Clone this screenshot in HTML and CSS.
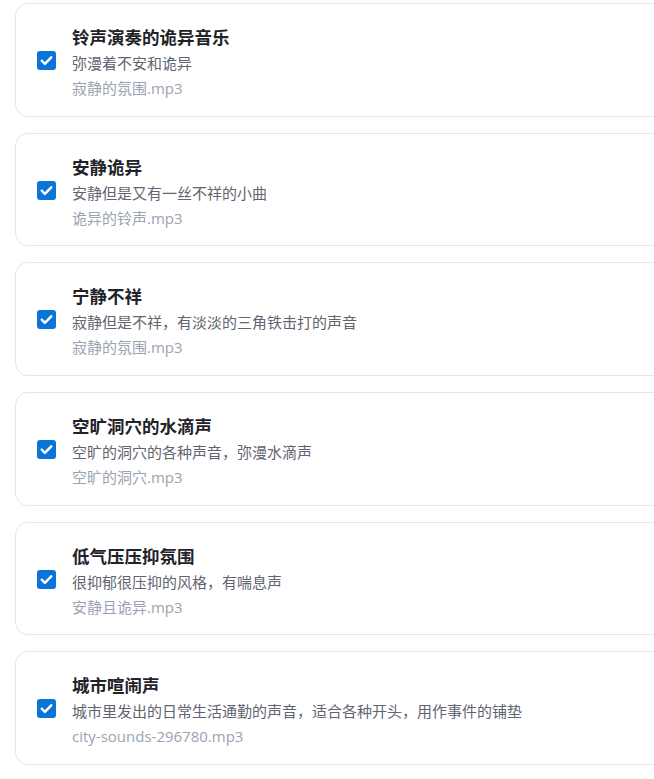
FILE: index.html
```html
<!DOCTYPE html>
<html lang="zh-CN">
<head>
    <meta charset="UTF-8">
    <meta name="viewport" content="width=device-width, initial-scale=1.0">
    <title>音效列表</title>
    <link rel="stylesheet" href="styles.css">
</head>
<body>

    <div class="page">
        <div class="sound-list">
            <label class="sound-card">
                <span class="check"><svg viewBox="0 0 20 20"><path d="M5 10.2l3.3 3.3L15 6.6"/></svg></span>
                <div class="info">
                    <div class="title">铃声演奏的诡异音乐</div>
                    <div class="desc">弥漫着不安和诡异</div>
                    <div class="file">寂静的氛围.mp3</div>
                </div>
            </label>

            <label class="sound-card">
                <span class="check"><svg viewBox="0 0 20 20"><path d="M5 10.2l3.3 3.3L15 6.6"/></svg></span>
                <div class="info">
                    <div class="title">安静诡异</div>
                    <div class="desc">安静但是又有一丝不祥的小曲</div>
                    <div class="file">诡异的铃声.mp3</div>
                </div>
            </label>

            <label class="sound-card">
                <span class="check"><svg viewBox="0 0 20 20"><path d="M5 10.2l3.3 3.3L15 6.6"/></svg></span>
                <div class="info">
                    <div class="title">宁静不祥</div>
                    <div class="desc">寂静但是不祥，有淡淡的三角铁击打的声音</div>
                    <div class="file">寂静的氛围.mp3</div>
                </div>
            </label>

            <label class="sound-card">
                <span class="check"><svg viewBox="0 0 20 20"><path d="M5 10.2l3.3 3.3L15 6.6"/></svg></span>
                <div class="info">
                    <div class="title">空旷洞穴的水滴声</div>
                    <div class="desc">空旷的洞穴的各种声音，弥漫水滴声</div>
                    <div class="file">空旷的洞穴.mp3</div>
                </div>
            </label>

            <label class="sound-card">
                <span class="check"><svg viewBox="0 0 20 20"><path d="M5 10.2l3.3 3.3L15 6.6"/></svg></span>
                <div class="info">
                    <div class="title">低气压压抑氛围</div>
                    <div class="desc">很抑郁很压抑的风格，有喘息声</div>
                    <div class="file">安静且诡异.mp3</div>
                </div>
            </label>

            <label class="sound-card">
                <span class="check"><svg viewBox="0 0 20 20"><path d="M5 10.2l3.3 3.3L15 6.6"/></svg></span>
                <div class="info">
                    <div class="title">城市喧闹声</div>
                    <div class="desc">城市里发出的日常生活通勤的声音，适合各种开头，用作事件的铺垫</div>
                    <div class="file">city-sounds-296780.mp3</div>
                </div>
            </label>
        </div>
    </div>

</body>
</html>
```

FILE: styles.css
```css
body {
    margin: 0;
    font-family: "Open Sans", "Noto Sans CJK SC", sans-serif;
    background: #ffffff;
}
.page {
    width: 100%;
    overflow: hidden;
}
/* cards run on past the right edge, as in the app's wide panel */
.sound-list {
    display: flex;
    flex-direction: column;
    gap: 16px;
    padding: 3px 0 0 15px;
    margin-right: -60px;
}
.sound-card {
    display: flex;
    align-items: center;
    gap: 16px;
    height: 113.7px;
    box-sizing: border-box;
    padding: 4px 20px 0 21px;
    border: 1px solid #e2e6ee;
    border-radius: 13px;
    background: white;
    cursor: pointer;
}
.check {
    flex: none;
    width: 19px;
    height: 19px;
    margin-top: -3px;
    border-radius: 3px;
    background: #0b74d8;
    display: flex;
    align-items: center;
    justify-content: center;
}
.check svg {
    width: 19px;
    height: 19px;
    fill: none;
    stroke: white;
    stroke-width: 2.6;
    stroke-linecap: round;
    stroke-linejoin: round;
}
.info {
    display: flex;
    flex-direction: column;
}
.title {
    font-size: 17.5px;
    font-weight: bold;
    line-height: 28px;
    color: #1f2329;
}
.desc {
    font-size: 15px;
    line-height: 25px;
    color: #5f6570;
}
.file {
    font-size: 15px;
    line-height: 25px;
    color: #9aa3b2;
}
```
